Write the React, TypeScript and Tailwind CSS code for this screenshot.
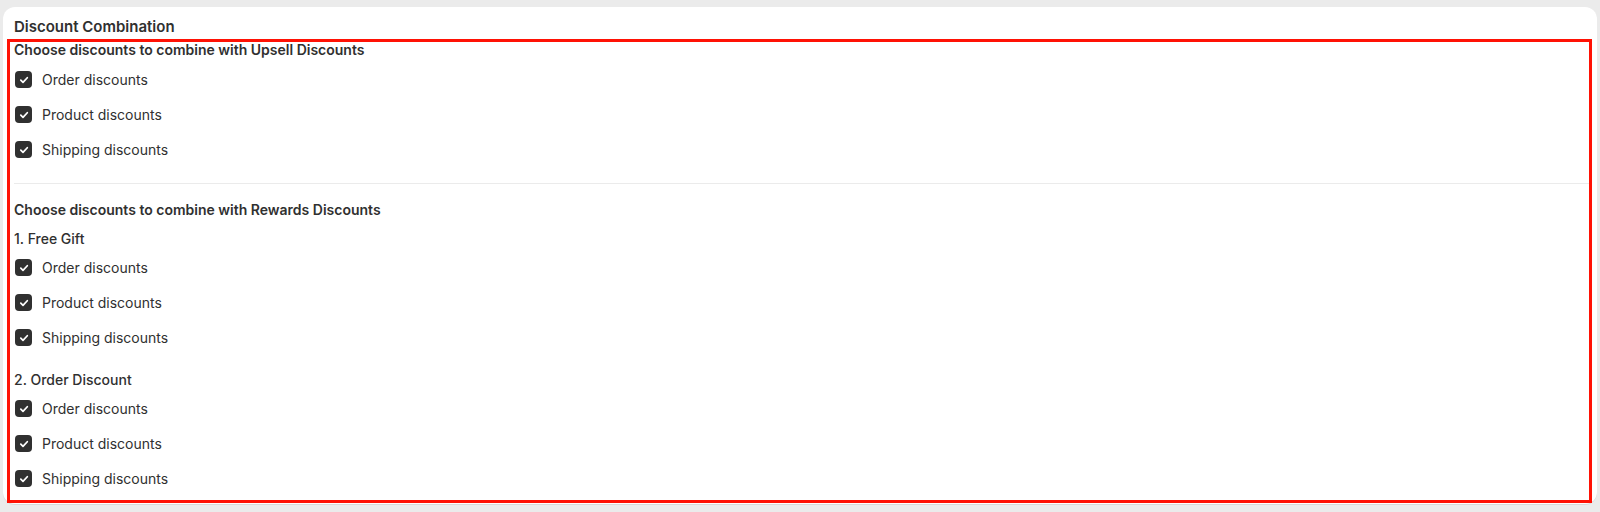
import React from 'react';

const Check = () => (
  <span className="flex h-[17px] w-[17px] shrink-0 items-center justify-center rounded-[4px] bg-[#303030]">
    <svg width="12" height="12" viewBox="0 0 12 12" fill="none">
      <path d="M2.8 6.2 5 8.4 9.3 3.7" stroke="#fff" strokeWidth="1.7" strokeLinecap="round" strokeLinejoin="round" />
    </svg>
  </span>
);

const Option = ({ label }: { label: string }) => (
  <label className="flex h-[35px] items-center gap-[10px] pl-px text-sm text-[#303030]">
    <Check />
    <span>{label}</span>
  </label>
);

const Options = () => (
  <div className="flex flex-col">
    <Option label="Order discounts" />
    <Option label="Product discounts" />
    <Option label="Shipping discounts" />
  </div>
);

export default function App() {
  return (
    <div className="h-[512px] bg-[#ebebeb] px-[3px] pt-[7px] font-['Inter',sans-serif] text-[#303030]">
      <div className="h-[497px] rounded-xl bg-white pt-[10px] pr-[5px] shadow-[0_1px_0_rgba(0,0,0,0.08)]">
        <h2 className="pl-[11px] text-[15px] font-semibold leading-5">Discount Combination</h2>
        <div className="mt-[2px] ml-1 h-[464px] border-[3px] border-[#ff1205] pl-[4px]">
          <h3 className="text-sm font-semibold leading-4">Choose discounts to combine with Upsell Discounts</h3>
          <div className="mt-[4px]">
            <Options />
          </div>
          <div className="mt-4 h-px bg-[#ebebeb]" />
          <h3 className="mt-[18px] text-sm font-semibold leading-4">Choose discounts to combine with Rewards Discounts</h3>
          <div className="mt-[11px] text-sm font-medium leading-5">1. Free Gift</div>
          <div className="mt-[1px]">
            <Options />
          </div>
          <div className="mt-[15px] text-sm font-medium leading-5">2. Order Discount</div>
          <div className="mt-[1px]">
            <Options />
          </div>
        </div>
      </div>
    </div>
  );
}
